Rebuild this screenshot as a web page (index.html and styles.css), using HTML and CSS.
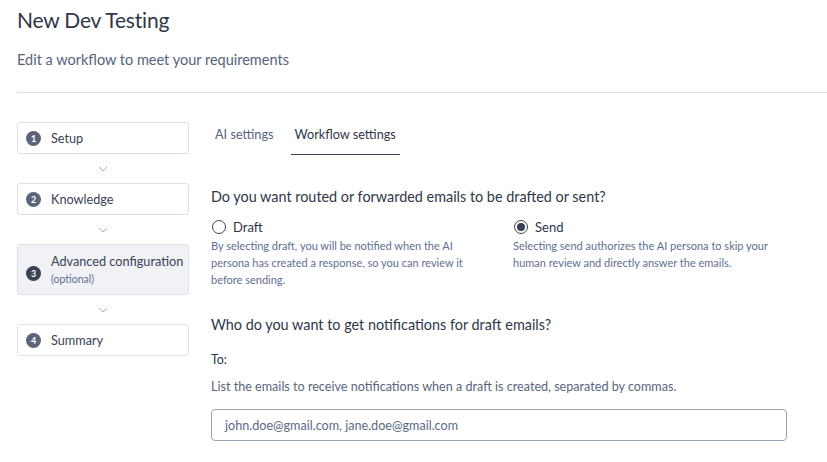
FILE: index.html
```html
<!DOCTYPE html>
<html>
<head>
<meta charset="utf-8">
<link rel="stylesheet" href="styles.css">
</head>
<body>
<div class="page">
  <header class="header">
    <h1 class="title">New Dev Testing</h1>
    <p class="subtitle">Edit a workflow to meet your requirements</p>
  </header>
  <div class="divider"></div>
  <div class="main">
    <nav class="steps">
      <div class="step"><span class="badge">1</span><span class="step-label">Setup</span></div>
      <div class="chev"><svg width="10" height="6" viewBox="0 0 10 6"><path d="M1 1l4 4 4-4" fill="none" stroke="#a9b2c3" stroke-width="1"/></svg></div>
      <div class="step"><span class="badge">2</span><span class="step-label">Knowledge</span></div>
      <div class="chev"><svg width="10" height="6" viewBox="0 0 10 6"><path d="M1 1l4 4 4-4" fill="none" stroke="#a9b2c3" stroke-width="1"/></svg></div>
      <div class="step active"><span class="badge">3</span><span class="step-text"><span class="step-label">Advanced configuration</span><span class="step-opt">(optional)</span></span></div>
      <div class="chev"><svg width="10" height="6" viewBox="0 0 10 6"><path d="M1 1l4 4 4-4" fill="none" stroke="#a9b2c3" stroke-width="1"/></svg></div>
      <div class="step"><span class="badge">4</span><span class="step-label">Summary</span></div>
    </nav>
    <section class="content">
      <div class="tabs">
        <div class="tab">AI settings</div>
        <div class="tab selected">Workflow settings</div>
      </div>
      <h2 class="q q1">Do you want routed or forwarded emails to be drafted or sent?</h2>
      <div class="options">
        <div class="option">
          <div class="radio-row"><span class="radio"></span><span class="radio-label">Draft</span></div>
          <p class="desc">By selecting draft, you will be notified when the AI persona has created a response, so you can review it before sending.</p>
        </div>
        <div class="option">
          <div class="radio-row"><span class="radio checked"></span><span class="radio-label">Send</span></div>
          <p class="desc">Selecting send authorizes the AI persona to skip your human review and directly answer the emails.</p>
        </div>
      </div>
      <h2 class="q q2">Who do you want to get notifications for draft emails?</h2>
      <div class="to">To:</div>
      <p class="help">List the emails to receive notifications when a draft is created, separated by commas.</p>
      <div class="input">john.doe@gmail.com, jane.doe@gmail.com</div>
    </section>
  </div>
</div>
</body>
</html>
```
FILE: styles.css
```css
* { box-sizing: border-box; }
html, body { margin: 0; padding: 0; background: #fff; }
body { font-family: Lato, "Open Sans", sans-serif; color: #2f3747; }
.page { padding: 0 0 0 17px; width: 827px; height: 462px; overflow: hidden; }
.header { padding-top: 7px; }
.title { margin: 0; font-size: 21px; font-weight: 400; line-height: 26px; color: #2f3747; letter-spacing: -0.2px; }
.subtitle { margin: 18px 0 0; font-size: 14.5px; line-height: 18px; color: #56637b; }
.divider { height: 1px; background: #d9dde4; margin-top: 23px; }
.main { display: grid; grid-template-columns: 172px 1fr; column-gap: 22px; margin-top: 29px; }
.steps { display: flex; flex-direction: column; }
.step { display: flex; align-items: center; border: 1px solid #dde1e7; border-radius: 3px; height: 32px; padding-left: 8px; background: #fff; }
.step.active { background: #f0f2f6; height: 51px; }
.badge { width: 15px; height: 15px; border-radius: 50%; background: #5b6479; color: #fff; font-size: 9px; font-weight: 700; display: flex; align-items: center; justify-content: center; margin-right: 10px; flex-shrink: 0; }
.step.active .badge { background: #3a4253; margin-top: 8px; }
.step-label { font-size: 12.7px; color: #3a4253; }
.step-text { display: flex; flex-direction: column; margin-top: -2px; }
.step-opt { font-size: 10.5px; color: #5d6f93; margin-top: 4px; }
.chev { height: 29px; display: flex; align-items: center; justify-content: center; }
.content { padding-right: 40px; }
.tabs { display: flex; gap: 13px; height: 33px; }
.tab { font-size: 12.7px; color: #56637b; padding: 4px 4px 0; height: 33px; }
.tab.selected { color: #2f3747; border-bottom: 1px solid #3a4253; }
.q { margin: 0; font-size: 14.4px; font-weight: 400; color: #2f3747; line-height: 20px; }
.q1 { margin-top: 32px; }
.options { display: grid; grid-template-columns: 302px 1fr; margin-top: 12px; }
.radio-row { display: flex; align-items: center; height: 16px; }
.radio { width: 14px; height: 14px; border-radius: 50%; border: 1px solid #3a4253; margin-right: 7px; position: relative; margin-left: 1px; }
.radio.checked::after { content: ""; position: absolute; left: 2px; top: 2px; width: 8px; height: 8px; border-radius: 50%; background: #3a4253; }
.radio-label { font-size: 13px; color: #2f3747; }
.desc { margin: 2px 0 0; font-size: 11px; line-height: 17px; color: #5d6f93; width: 262px; }
.q2 { margin-top: 27px; }
.to { font-size: 12.4px; margin-top: 17px; color: #2f3747; }
.help { margin: 12px 0 0; font-size: 12.6px; color: #5a667d; }
.input { margin-top: 15px; width: 576px; height: 32px; border: 1px solid #98a3b9; border-radius: 4px; font-size: 12.6px; color: #5a6a88; padding-left: 13px; display: flex; align-items: center; }
```
